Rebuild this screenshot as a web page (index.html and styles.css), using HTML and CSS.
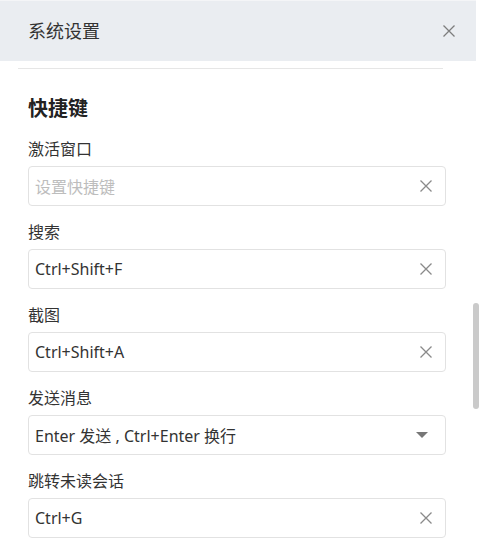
FILE: index.html
```html
<!DOCTYPE html>
<html lang="zh-CN">
<head>
<meta charset="utf-8">
<title>系统设置</title>
<link rel="stylesheet" href="styles.css">
</head>
<body>
<div class="window">
  <header class="header">
    <span class="title">系统设置</span>
    <svg class="icon-x close" viewBox="0 0 12 12"><path d="M0.5 0.5L11.5 11.5M11.5 0.5L0.5 11.5"/></svg>
  </header>
  <div class="divider"></div>
  <main class="content">
    <h2 class="section-title">快捷键</h2>
    <div class="field">
      <div class="label">激活窗口</div>
      <div class="input"><span class="placeholder">设置快捷键</span><svg class="icon-x" viewBox="0 0 12 12"><path d="M0.5 0.5L11.5 11.5M11.5 0.5L0.5 11.5"/></svg></div>
    </div>
    <div class="field">
      <div class="label">搜索</div>
      <div class="input"><span class="value">Ctrl+Shift+F</span><svg class="icon-x" viewBox="0 0 12 12"><path d="M0.5 0.5L11.5 11.5M11.5 0.5L0.5 11.5"/></svg></div>
    </div>
    <div class="field">
      <div class="label">截图</div>
      <div class="input"><span class="value">Ctrl+Shift+A</span><svg class="icon-x" viewBox="0 0 12 12"><path d="M0.5 0.5L11.5 11.5M11.5 0.5L0.5 11.5"/></svg></div>
    </div>
    <div class="field">
      <div class="label">发送消息</div>
      <div class="input"><span class="value">Enter 发送 , Ctrl+Enter 换行</span><svg class="caret" viewBox="0 0 12 6"><path d="M0 0H12L6 6Z"/></svg></div>
    </div>
    <div class="field">
      <div class="label">跳转未读会话</div>
      <div class="input"><span class="value">Ctrl+G</span><svg class="icon-x" viewBox="0 0 12 12"><path d="M0.5 0.5L11.5 11.5M11.5 0.5L0.5 11.5"/></svg></div>
    </div>
  </main>
  <div class="scrollbar"></div>
</div>
</body>
</html>
```

FILE: styles.css
```css
* { box-sizing: border-box; }
html, body { margin: 0; padding: 0; background: #fff; }
body {
  font-family: "Noto Sans", "Noto Sans CJK SC", sans-serif;
  color: #333;
  width: 480px;
  height: 540px;
  overflow: hidden;
}
.window { position: relative; width: 480px; height: 540px; overflow: hidden; }
.header {
  width: 476px;
  height: 61px;
  background: #eaedf1;
  border-top: 1px solid #f4f5f7;
  display: flex;
  align-items: center;
  justify-content: space-between;
  padding: 0 21px 0 28px;
}
.title { font-size: 18px; line-height: 24px; color: #333; }
.icon-x { width: 12px; height: 12px; flex: none; }
.icon-x path { stroke: #8a8a8a; stroke-width: 1.3; fill: none; }
.close path { stroke: #7d7d7d; }
.divider { margin: 7px 0 0 18px; width: 425px; height: 1px; background: #e6e6e6; }
.content { padding: 26px 34px 0 28px; display: flex; flex-direction: column; gap: 15px; }
.section-title { margin: 0; font-size: 20px; line-height: 28px; font-weight: bold; color: #222; }
.field { display: flex; flex-direction: column; }
.label { font-size: 16px; line-height: 22px; margin-bottom: 6px; color: #333; }
.input {
  height: 40px;
  border: 1px solid #e2e2e2;
  border-radius: 4px;
  display: flex;
  align-items: center;
  justify-content: space-between;
  padding: 0 13px 0 6px;
  font-size: 16px;
}
.placeholder { color: #bdbdbd; }
.value { color: #333; }
.caret { width: 12px; height: 6px; margin-right: 4px; }
.caret path { fill: #777; }
.scrollbar {
  position: absolute;
  left: 473px;
  top: 303px;
  width: 6px;
  height: 106px;
  border-radius: 3px;
  background: #cacaca;
}
```
